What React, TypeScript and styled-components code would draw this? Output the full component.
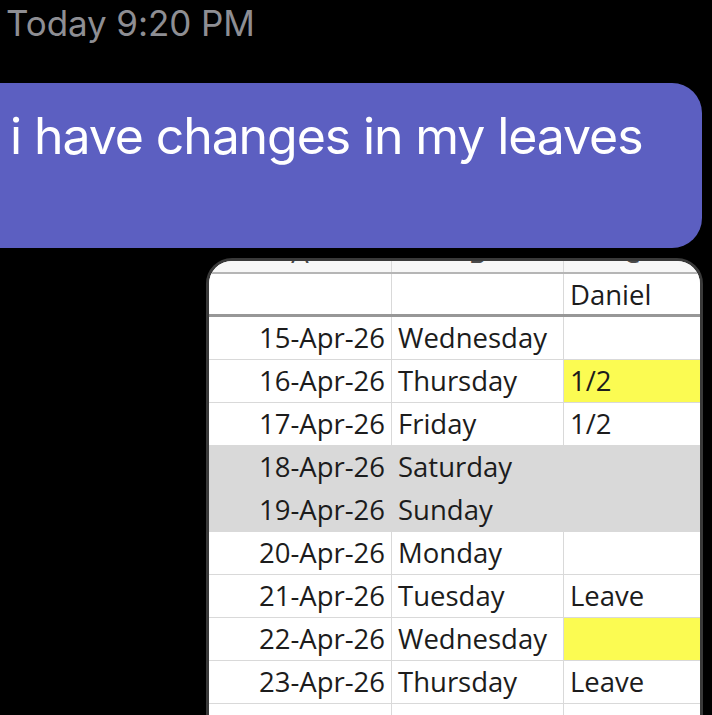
import React from 'react';
import styled, { createGlobalStyle } from 'styled-components';

const GlobalStyle = createGlobalStyle`
    html,
    body {
        margin: 0;
        padding: 0;
        background: #000;
    }
`;

const Screen = styled.div`
    width: 712px;
    height: 715px;
    box-sizing: border-box;
    padding-top: 6px;
    overflow: hidden;
    background: #000;
    display: flex;
    flex-direction: column;
`;

const Timestamp = styled.div`
    padding-left: 6px;
    font-family: Inter, 'Liberation Sans', sans-serif;
    font-size: 35px;
    line-height: 35px;
    letter-spacing: -0.1px;
    color: #8e8e93;
`;

const Bubble = styled.div`
    flex-shrink: 0;
    height: 165px;
    box-sizing: border-box;
    margin: 42px 10px 0 -40px;
    padding: 23px 20px 0 50px;
    border-radius: 30px;
    background: #5c5fc1;
    color: #fff;
    font-family: Inter, 'Liberation Sans', sans-serif;
    font-size: 50px;
    line-height: 60px;
    letter-spacing: -1.1px;
`;

const Attachment = styled.div`
    flex-shrink: 0;
    align-self: flex-end;
    width: 491px;
    margin: 10px 9px 0 0;
    border: 3px solid #3a3a3a;
    border-radius: 26px;
    overflow: hidden;
    background: #fff;
    font-family: 'Open Sans', Lato, sans-serif;
    font-size: 27.5px;
    color: #1c1c1c;
`;

const Row = styled.div<{ $height: number; $line?: string; $fill?: string }>`
    display: grid;
    grid-template-columns: 183px 172px 1fr;
    height: ${({ $height }) => $height}px;
    box-sizing: border-box;
    overflow: hidden;
    background: ${({ $fill }) => $fill || '#fff'};
    border-bottom: ${({ $line }) => $line || 'none'};
    line-height: ${({ $height }) => $height - 1}px;
`;

const Cell = styled.div<{ $align?: 'left' | 'right'; $grid?: boolean; $fill?: string }>`
    box-sizing: border-box;
    padding: 0 6px;
    white-space: nowrap;
    text-align: ${({ $align }) => $align || 'left'};
    background: ${({ $fill }) => $fill || 'transparent'};
    border-right: 1px solid ${({ $grid }) => ($grid ? '#d9d9d9' : 'transparent')};
`;

const ColumnLetter = styled(Cell)`
    margin-top: -21px;
    line-height: 26px;
    text-align: center;
    color: #4a4a4a;
`;

interface Day {
    date: string;
    day: string;
    note?: string;
    highlight?: boolean;
    weekend?: boolean;
}

const days: Day[] = [
    { date: '15-Apr-26', day: 'Wednesday' },
    { date: '16-Apr-26', day: 'Thursday', note: '1/2', highlight: true },
    { date: '17-Apr-26', day: 'Friday', note: '1/2' },
    { date: '18-Apr-26', day: 'Saturday', weekend: true },
    { date: '19-Apr-26', day: 'Sunday', weekend: true },
    { date: '20-Apr-26', day: 'Monday' },
    { date: '21-Apr-26', day: 'Tuesday', note: 'Leave' },
    { date: '22-Apr-26', day: 'Wednesday', highlight: true },
    { date: '23-Apr-26', day: 'Thursday', note: 'Leave' },
    { date: '', day: '' },
];

const LeaveSheet = () => (
    <Attachment>
        <Row $height={13} $line="2px solid #b5b5b5" $fill="#f7f7f7">
            <ColumnLetter $grid>A</ColumnLetter>
            <ColumnLetter $grid>B</ColumnLetter>
            <ColumnLetter>C</ColumnLetter>
        </Row>
        <Row $height={43} $line="3px solid #979797">
            <Cell $grid />
            <Cell $grid />
            <Cell>Daniel</Cell>
        </Row>
        {days.map((d, i) => {
            const next = days[i + 1];
            const joined = d.weekend && next?.weekend;
            return (
                <Row
                    key={i}
                    $height={43}
                    $fill={d.weekend ? '#d9d9d9' : undefined}
                    $line={joined ? undefined : '1px solid #d9d9d9'}
                >
                    <Cell $align="right" $grid={!d.weekend}>
                        {d.date}
                    </Cell>
                    <Cell $grid={!d.weekend}>{d.day}</Cell>
                    <Cell $fill={d.highlight ? '#fbfb52' : undefined}>{d.note}</Cell>
                </Row>
            );
        })}
    </Attachment>
);

export default function App() {
    return (
        <>
            <GlobalStyle />
            <Screen>
                <Timestamp>Today 9:20 PM</Timestamp>
                <Bubble>i have changes in my leaves</Bubble>
                <LeaveSheet />
            </Screen>
        </>
    );
}
